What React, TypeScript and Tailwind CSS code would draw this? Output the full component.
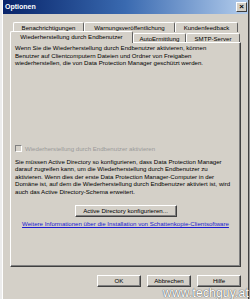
import React from 'react';

const backTabs = [
  { label: 'Benachrichtigungen', w: 'w-[71px]' },
  { label: 'Warnungsveröffentlichung', w: 'w-[91px]' },
  { label: 'Kundenfeedback', w: 'w-[63px]' },
];

const frontTabs = [
  { label: 'Wiederherstellung durch Endbenutzer', w: 'w-[123px]', active: true },
  { label: 'AutoErmittlung', w: 'w-[53px]', active: false },
  { label: 'SMTP-Server', w: 'w-[54px]', active: false },
];

function Tab({ label, w, active }: { label: string; w: string; active?: boolean }) {
  return (
    <div
      className={`${w} ${
        active ? 'h-[12px] z-10 relative pt-[1px]' : 'h-[10px] pt-[1px]'
      } flex items-start justify-center bg-[#d4d0c8] border-t border-l border-white border-r border-r-[#606060] rounded-t-[2px] leading-[8px] whitespace-nowrap`}
    >
      {label}
    </div>
  );
}

function Button({ children, w }: { children: React.ReactNode; w: string }) {
  return (
    <div
      className={`${w} h-[12px] flex items-center justify-center bg-[#d4d0c8] border border-t-white border-l-white border-r-[#404040] border-b-[#404040] shadow-[inset_-1px_-1px_0_#808080] whitespace-nowrap`}
    >
      {children}
    </div>
  );
}

export default function App() {
  return (
    <div className="relative w-[250px] h-[299px] overflow-hidden flex bg-[#d4d0c8] font-['Liberation_Sans',Arial,sans-serif] text-[6.1px] text-black">
      <div className="w-[2px] bg-[#ececec]" />
      <div className="flex-1 flex flex-col border-l border-white border-r border-r-[#404040]">
        {/* Title bar */}
        <div className="h-[14px] flex items-center justify-between pl-[2px] pr-[1px] bg-gradient-to-r from-[#0a246a] via-[#3a6ab0] to-[#b4cdec]">
          <span className="text-white font-bold text-[7px]">Optionen</span>
          <div className="w-[11px] h-[10px] flex items-center justify-center bg-[#d4d0c8] border border-t-white border-l-white border-r-[#404040] border-b-[#404040] text-[8px] font-bold leading-none">
            ×
          </div>
        </div>

        {/* Tabs + panel */}
        <div className="ml-[7px] w-[231px] mt-[8px] flex flex-col">
          <div className="flex pl-[3px] h-[9px] items-start">
            {backTabs.map((t) => (
              <Tab key={t.label} label={t.label} w={t.w} />
            ))}
          </div>
          <div className="flex items-end -mb-[1px]">
            {frontTabs.map((t) => (
              <Tab key={t.label} label={t.label} w={t.w} active={t.active} />
            ))}
          </div>
          <div className="h-[225px] flex flex-col px-[4px] border border-t-white border-l-white border-r-[#404040] border-b-[#404040] shadow-[inset_-1px_-1px_0_#808080] leading-[7.5px] whitespace-nowrap">
            <p className="mt-[1px]">
              Wenn Sie die Wiederherstellung durch Endbenutzer aktivieren, können
              <br />
              Benutzer auf Clientcomputern Dateien und Ordner von Freigaben
              <br />
              wiederherstellen, die von Data Protection Manager geschützt werden.
            </p>
            <div className="mt-[78px] h-[8px] flex items-center gap-[3px] text-[#9a9a9a]">
              <div className="w-[7px] h-[7px] border border-t-[#808080] border-l-[#808080] border-r-white border-b-white bg-[#d4d0c8]" />
              <span>Wiederherstellung durch Endbenutzer aktivieren</span>
            </div>
            <p className="mt-[5px]">
              Sie müssen Active Directory so konfigurieren, dass Data Protection Manager
              <br />
              darauf zugreifen kann, um die Wiederherstellung durch Endbenutzer zu
              <br />
              aktivieren. Wenn dies der erste Data Protection Manager-Computer in der
              <br />
              Domäne ist, auf dem die Wiederherstellung durch Endbenutzer aktiviert ist, wird
              <br />
              auch das Active Directory-Schema erweitert.
            </p>
            <div className="mt-[10px] flex justify-center">
              <Button w="w-[102px]">Active Directory konfigurieren...</Button>
            </div>
            <div className="mt-[3px] flex justify-center">
              <span className="text-[#1a1ad0] underline">
                Weitere Informationen über die Installation von Schattenkopie-Clientsoftware
              </span>
            </div>
          </div>
          <div className="mt-[8px] flex justify-end gap-[6px]">
            <Button w="w-[44px]">OK</Button>
            <Button w="w-[44px]">Abbrechen</Button>
            <Button w="w-[44px]">Hilfe</Button>
          </div>
        </div>
      </div>
      <div className="w-[1px] bg-[#9a9a9a]" />

      {/* watermark */}
      <span className="absolute right-[1px] bottom-[0px] text-[12px] leading-[12px] text-white tracking-[0.2px] [text-shadow:0_0_1px_#555,0_0_1px_#555]">
        www.techguy.at
      </span>
    </div>
  );
}
